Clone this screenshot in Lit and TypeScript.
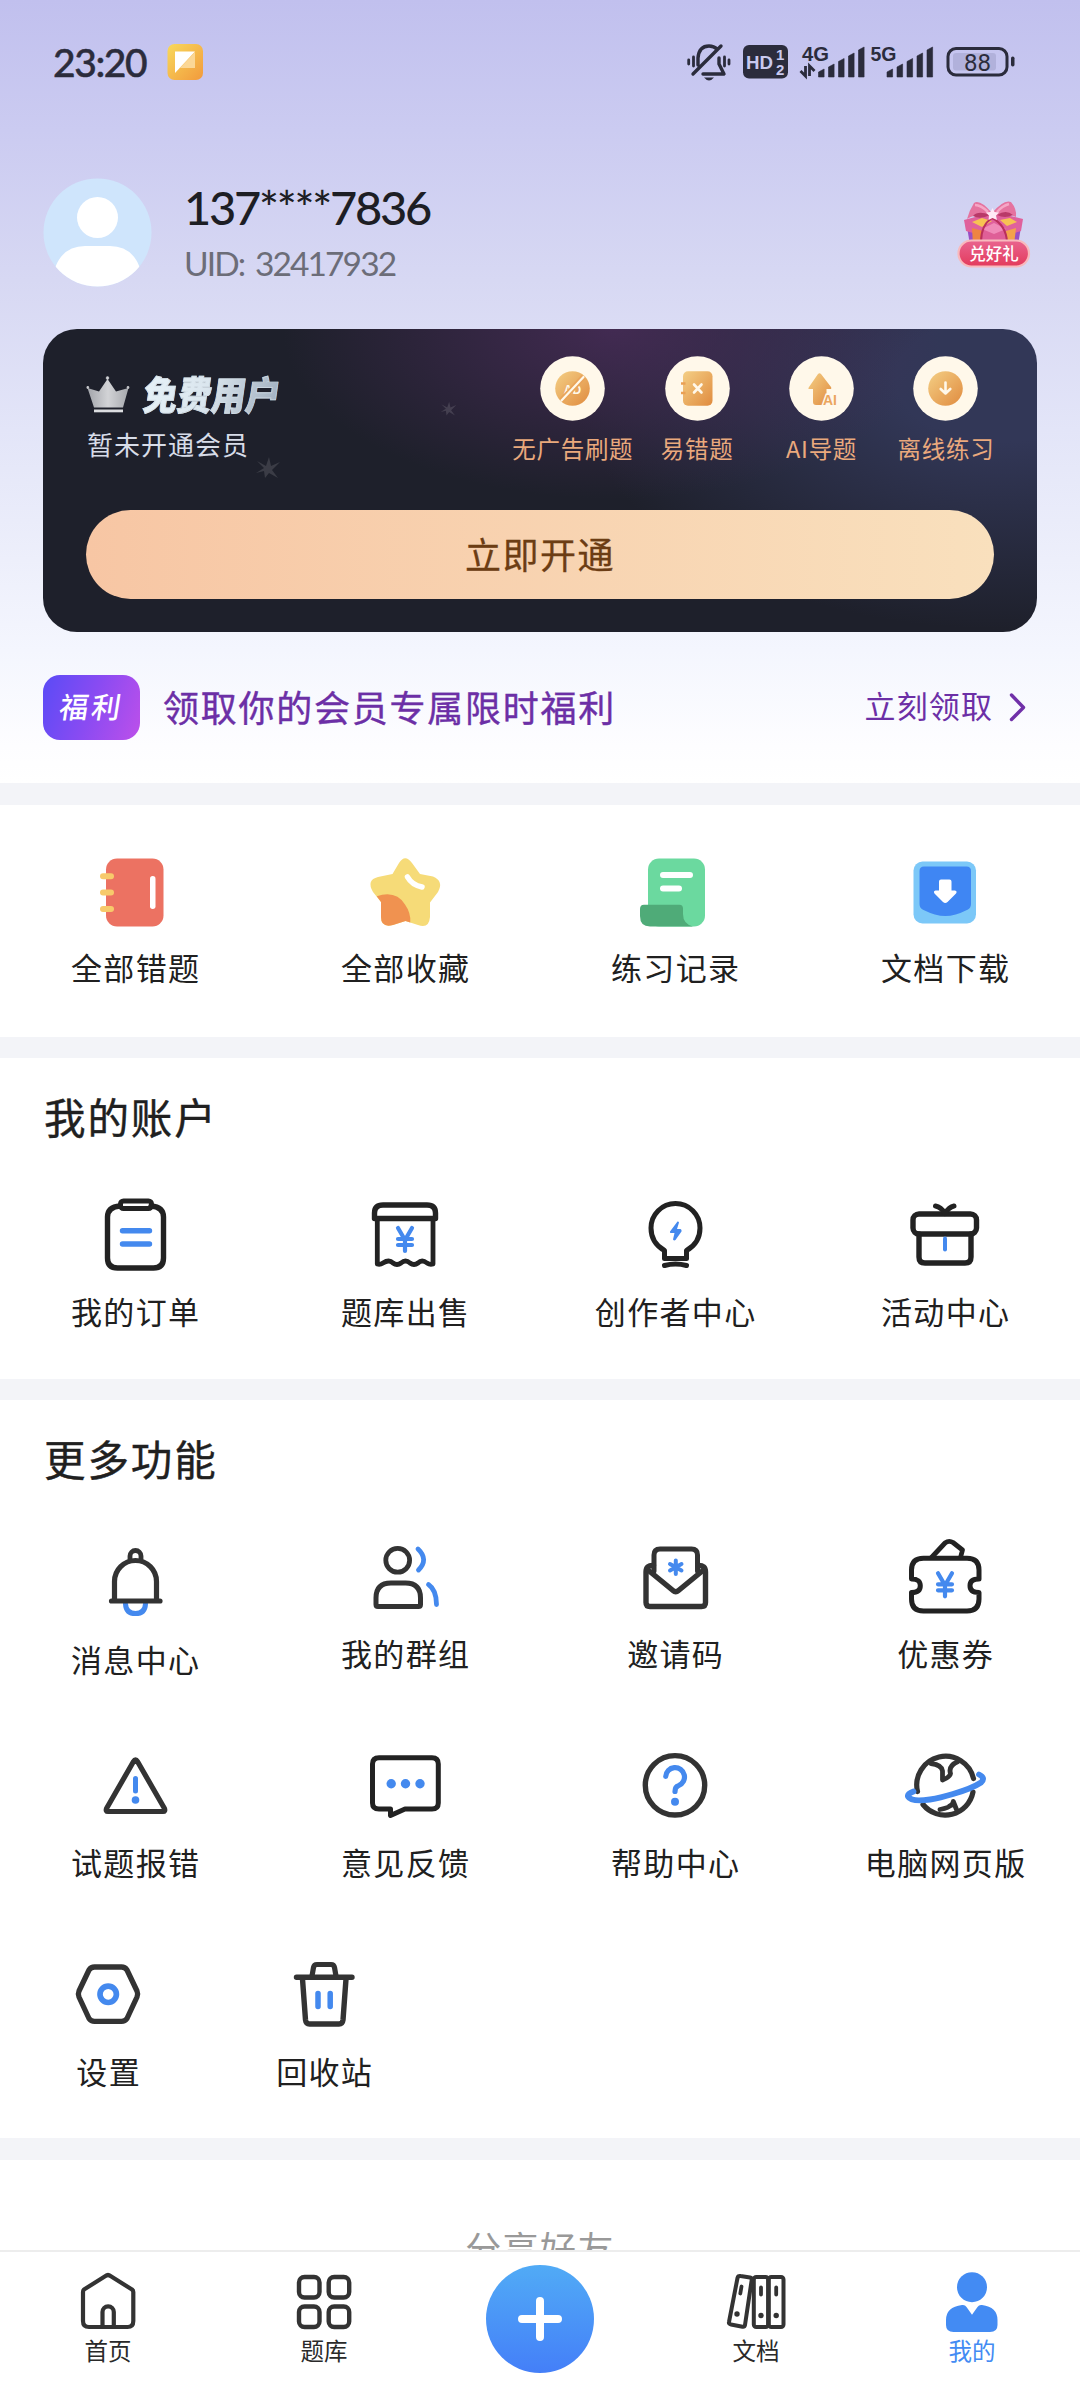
import { LitElement, html, css, svg, type TemplateResult, type SVGTemplateResult } from "lit";
import { customElement, property } from "lit/decorators.js";

type Art = SVGTemplateResult;

interface Entry {
  label: string;
  art: Art;
  low?: boolean;
}

const INK = "#222222";
const SOFT = "#333333";
const BLUE = "#4489ee";

/* Outline helper: rounded stroke without fill. */
const line = (d: string, color = INK, width = 5.4): Art =>
  svg`<path d=${d} fill="none" stroke=${color} stroke-width=${width} stroke-linecap="round" stroke-linejoin="round"></path>`;

const yen = (dy: number): Art =>
  line(`M-7 ${dy - 11}L0 ${dy + 1}L7 ${dy - 11}M0 ${dy + 1}V${dy + 12}M-7 ${dy}H7M-7 ${dy + 6}H7`, BLUE, 4.2);

const art = {
  notebook: svg`
    <rect x="-29" y="-33.5" width="57.5" height="68" rx="11" fill="#ec7262"></rect>
    <rect x="-35" y="-18.7" width="14" height="6" rx="3" fill="#f7ca6b"></rect>
    <rect x="-35" y="-2.5" width="14" height="6" rx="3" fill="#f7ca6b"></rect>
    <rect x="-35" y="14" width="14" height="6" rx="3" fill="#f7ca6b"></rect>
    <rect x="15" y="-16" width="5.5" height="33" rx="2.7" fill="#fff"></rect>`,
  star: svg`
    <path d="M-12.5-18L-6-29Q0-38.500 7-29L15-18L28-15.500Q39-11 33 0L25 10.500V25Q24 37 13 33L.5 29L-12 33Q-24 36-24 25V10L-32 0Q-39-12-27-15Z" fill="#f6db78"></path>
    <path d="M-28.300 4.200Q-9-2 0 12.500Q6 21 5.300 30.500L.5 29L-12 33Q-24 36-24 25V10Z" fill="#f09250"></path>
    ${line("M2.500-15Q7-7 17-5", "#fff", 5.5)}`,
  record: svg`
    <rect x="-27" y="-33.500" width="57" height="68" rx="11" fill="#6bd99f"></rect>
    <path d="M-31 12.700H4.500Q8 12.700 8 16.500V22Q8 32 18 34.500H-25Q-35 34.500-35 24V17Q-35 12.700-31 12.700Z" fill="#4fab78"></path>
    ${line("M-12-17H15M-12-3.500H4", "#fff", 6)}`,
  download: svg`
    <rect x="-31.500" y="-30.500" width="62.500" height="62" rx="9" fill="#7cc8f8"></rect>
    <path d="M-25.500-21Q-25.500-25.500-21-25.500H21.500Q26-25.500 26-21V12Q26 16 22.500 17.700Q10 24 .3 24T-22 17.700Q-25.500 16-25.500 12Z" fill="#3f86f3"></path>
    <path d="M-6-10.500Q-6-12.500-4-12.500H4.500Q6.500-12.500 6.500-10.500V-1.500H10Q12.500-1 11 1.500L2.500 10Q.2 12-2 10L-10.500 1.500Q-12-1-9.500-1.500H-6Z" fill="#fff"></path>`,
  clipboard: svg`
    ${line("M-15-29Q-27.500-28-27.500-18V23Q-27.500 33-17.500 33H18.500Q28.500 33 28.500 23V-18Q28.500-28 16-29")}
    <rect x="-14.500" y="-34" width="31" height="7.500" rx="3" fill="none" stroke=${INK} stroke-width="5"></rect>
    ${line("M-12.500-4.300H14.500M-12.500 9H14.500", BLUE, 5.4)}`,
  bill: svg`
    ${line("M-30.500-16.500V-22Q-30.500-30-22-30H22Q30.500-30 30.500-22V-16.500Z")}
    ${line("M-27.700-16V29Q-25 30-22 28Q-16 24-12 28Q-8 31-4 28Q.5 24 5 28Q9 31 13 28Q17 24 22 28Q25 30 28 29V-16", INK, 4.8)}
    ${yen(4)}`,
  bulb: svg`
    ${line("M-10.500 23.500V15.500Q-24 8-24-7A24.300 24.300 0 0 1 25-7Q25 8 11.500 15.500V23.500Z", INK, 5)}
    ${line("M-10.500 30.500Q.5 27.500 11.500 30.500", INK, 5)}
    <path d="M2.500-13.500L-5-3.500Q-5.500-2 -4-2H-.5L-2 4.500Q-1 6 .5 5L6.500-3.500Q7-5.500 5.500-6H2L4-12.500Q3.500-14 2.500-13.500Z" fill=${BLUE}></path>`,
  gift: svg`
    <rect x="-32" y="-21" width="63.500" height="20" rx="6" fill="none" stroke=${INK} stroke-width="5.400"></rect>
    ${line("M-26-1V22Q-26 28-20 28H20Q26 28 26 22V-1")}
    ${line("M-9.500-29Q-4-28 0-21.500Q4-28 9-29", INK, 5)}
    <rect x="-2" y="1.500" width="4" height="15" rx="2" fill=${BLUE}></rect>`,
  bell: svg`
    ${line("M-9.500 27Q-9 36.500.5 36.500T10.500 27", BLUE, 5)}
    ${line("M-5-17V-21A5.500 5.500 0 0 1 6-21V-17", SOFT, 4.8)}
    ${line("M-20.500 24V4.500A21 21 0 0 1 21.500 4.500V24M-23.500 24H25", SOFT, 5.2)}`,
  group: svg`
    <circle cx="-7.300" cy="-16.700" r="11.900" fill="none" stroke=${SOFT} stroke-width="4.800"></circle>
    ${line("M-29 27.500V21Q-29 6-14 6H.5Q15.500 6 15.500 21V27.500Q15.500 29.500 13.500 29.500H-27Q-29 29.500-29 27.500Z", SOFT, 5)}
    ${line("M13-28Q24-17.500 13.500-7M23.500 7.500Q31.500 13 31.500 27.500", BLUE, 4.8)}`,
  invite: svg`
    ${line("M-21-6V-22Q-21-28-15-28H16.500Q22.500-28 22.500-22V-6", SOFT, 5)}
    ${line("M-21.500-11.500Q-29-12-29-5V25.500Q-29 29.500-25 29.500H26.500Q30.500 29.500 30.500 25.500V-5Q30.500-12 23-11.500", SOFT)}
    ${line("M-27-7L-2 13.500Q.7 16 3.500 13.500L28.500-7", SOFT)}
    ${line("M.8-16.500V-3M-5-13L6.500-6.500M6.500-13L-5-6.500", BLUE, 4)}`,
  coupon: svg`
    ${line("M-33.500 2V-7Q-33.500-18.800-21.500-18.800H22Q34-18.800 34-7V2Q25 2 25 8.700T34 15.500V22Q34 34 22 34H-21.500Q-33.500 34-33.500 22V15.500Q-24.700 15.500-24.700 8.700T-33.500 2Z", INK, 5)}
    ${line("M-13.500-19.500L0-34Q4-37 8-34.500L17.500-27L15.500-19.500", INK, 4.8)}
    ${yen(7.3)}`,
  warning: svg`
    ${line("M-1.500-24.500Q.5-28 2.500-24.500L29.500 22.500Q30.500 25.500 28 25.500H-27Q-29.500 25.500-28.500 22.500Z", SOFT, 5.2)}
    ${line("M.5-7.500V5", BLUE, 5)}
    <circle cx=".5" cy="14" r="3.800" fill=${BLUE}></circle>`,
  chat: svg`
    ${line("M-26-28.300H27Q33.300-28.300 33.300-22V17Q33.300 23 27 23H0L-14.500 29.500V23H-26Q-32.500 23-32.500 17V-22Q-32.500-28.300-26-28.300Z", INK, 5)}
    <circle cx="-13.800" cy="-2.300" r="4.700" fill=${BLUE}></circle>
    <circle cx=".5" cy="-2.300" r="4.700" fill=${BLUE}></circle>
    <circle cx="15" cy="-2.300" r="4.700" fill=${BLUE}></circle>`,
  help: svg`
    <circle cx="0" cy="-.7" r="29.700" fill="none" stroke=${SOFT} stroke-width="5.400"></circle>
    ${line("M-9.300-9.500A9.400 9.400 0 1 1 3.500-.300Q0 .6 0 5.500", BLUE, 5.2)}
    <circle cx="0" cy="15.800" r="4" fill=${BLUE}></circle>`,
  globe: svg`
    ${line("M-27.500 5.500A28.400 28.400 0 1 1 28.500-7.500M-22 18.500A28.400 28.400 0 0 0 28 6", SOFT, 5.2)}
    ${line("M-14-22.500Q-3-21-2.500-15V-6Q5-9 5.500-12.500Q3-20 13-24.500", SOFT, 4.8)}
    ${line("M-5 23.500Q4 22 4.500 20Q8 19 8.300 15.500L11.500 23.500", SOFT, 4.8)}
    ${line("M-31.500 5.500Q-38 8-37 10.500Q-34 16-15 13.500Q-5 12 8 8Q27 2.500 36-3.500Q41-8 34-11.500", BLUE, 5.8)}`,
  settings: svg`
    ${line("M-13.500-27H13.500Q17-27 19-24L29-3Q30.300 0 29 3L19 24.500Q17 27.300 13.500 27.300H-13.500Q-17 27.300-19 24.500L-29 3Q-30.300 0-29-3L-19-24Q-17-27-13.500-27Z", SOFT, 5.3)}
    <circle cx=".2" cy=".3" r="8.200" fill="none" stroke=${BLUE} stroke-width="5.700"></circle>`,
  trash: svg`
    ${line("M-12-18L-10.500-26.500Q-10-29.500-7-29.500H7Q10-29.500 10.500-26.500L12-18", SOFT, 5.2)}
    ${line("M-21.500-15L-18.500 26Q-18 30-14.500 30H15Q18.500 30 19 26L22-15M-27.500-16.700H28", SOFT, 5.4)}
    ${line("M-6-.5V12.500M6.200-.5V12.500", BLUE, 5.5)}`,
  home: svg`
    ${line("M-25-9Q-25-10.500-24-11.500L-2.500-25Q0-27 2.500-25L24-11.500Q25.300-10.500 25.300-9V20Q25.300 26 19.500 26H-19Q-25 26-25 20Z", SOFT, 4.2)}
    ${line("M-5.500 25V11A5.600 5.600 0 0 1 5.800 11V25", SOFT, 4.2)}`,
  grid: svg`
    <g fill="none" stroke=${SOFT} stroke-width="4.400">
      <rect x="-25" y="-24" width="20.500" height="20.500" rx="5.500"></rect>
      <rect x="4.700" y="-24" width="20.500" height="20.500" rx="5.500"></rect>
      <rect x="-25" y="5.500" width="20.500" height="20.500" rx="5.500"></rect>
      <rect x="4.700" y="5.500" width="20.500" height="20.500" rx="5.500"></rect>
    </g>`,
  docs: svg`
    <g fill="none" stroke=${SOFT} stroke-width="4" stroke-linejoin="round">
      <rect x="-2.200" y="-24" width="14.300" height="50" rx="2.500"></rect>
      <rect x="12.800" y="-24" width="14.700" height="50" rx="2.500"></rect>
      <path d="M-15.500-25L-6-23.500Q-4-23-4.300-21L-11 24Q-11.500 26-13.500 25.700L-25 23.500Q-27.500 23-27 21L-18.500-23Q-18-25.500-15.500-25Z"></path>
    </g>
    ${line("M5-13.500V-6.500M20.200-13.500V-6.500M-14.500-14.500L-15.700-7.500", SOFT, 3.8)}
    <circle cx="5" cy="14.500" r="2.700" fill=${SOFT}></circle>
    <circle cx="20.200" cy="14.500" r="2.700" fill=${SOFT}></circle>
    <circle cx="-19" cy="13" r="2.700" fill=${SOFT}></circle>`,
  me: svg`
    <circle cx="0" cy="-13.800" r="15" fill="#438bf3"></circle>
    <path d="M-10 4Q-7 3.500-5.500 6L0 13.800L5.500 6Q7 3.500 10 4Q25.500 6 25.500 19V24Q25.500 31 18 31H-18.500Q-26 31-26 24V19Q-26 6-10 4Z" fill="#438bf3"></path>`,
};

const perks: Entry[] = [
  {
    label: "无广告刷题",
    art: svg`
      <circle r="17.300" fill="url(#gold)"></circle>
      <text x="0" y="5" text-anchor="middle" class="ad">AD</text>
      <path d="M-11 12L11-11.500" stroke="#e9a45a" stroke-width="5.500"></path>
      <path d="M-11 12L11-11.500" stroke="#fff8ea" stroke-width="2.200" stroke-linecap="round"></path>`,
  },
  {
    label: "易错题",
    art: svg`
      <rect x="-14.500" y="-17.300" width="29.500" height="34.500" rx="5" fill="url(#gold)"></rect>
      <path d="M-16.500-5H-12M-16.500 4.500H-12" stroke="#eaa055" stroke-width="2.400"></path>
      <path d="M-3.500-4L4 4M4-4L-3.500 4" stroke="#fff8ea" stroke-width="2.600" stroke-linecap="round"></path>`,
  },
  {
    label: "AI导题",
    art: svg`
      <path d="M-3.500-14.500Q-2-16-.5-14.500L9.500-1.500Q10.500 .5 8.500 .5H5V5L1 16.500H-5.500Q-8.500 16.500-8.500 13.500V.5H-12Q-14 .5-12.500-1.500Z" fill="url(#gold)"></path>
      <text x="1.500" y="16.500" class="ai">AI</text>`,
  },
  {
    label: "离线练习",
    art: svg`
      <circle r="17.300" fill="url(#gold)"></circle>
      <path d="M0-6V4.500M-4.800 .5L0 5L4.800 .5" fill="none" stroke="#fff8ea" stroke-width="2.600" stroke-linecap="round" stroke-linejoin="round"></path>`,
  },
];

const shortcuts: Entry[] = [
  { label: "全部错题", art: art.notebook },
  { label: "全部收藏", art: art.star },
  { label: "练习记录", art: art.record },
  { label: "文档下载", art: art.download },
];

const account: Entry[] = [
  { label: "我的订单", art: art.clipboard },
  { label: "题库出售", art: art.bill },
  { label: "创作者中心", art: art.bulb },
  { label: "活动中心", art: art.gift },
];

const moreRows: Entry[][] = [
  [
    { label: "消息中心", art: art.bell, low: true },
    { label: "我的群组", art: art.group },
    { label: "邀请码", art: art.invite },
    { label: "优惠券", art: art.coupon },
  ],
  [
    { label: "试题报错", art: art.warning },
    { label: "意见反馈", art: art.chat },
    { label: "帮助中心", art: art.help },
    { label: "电脑网页版", art: art.globe },
  ],
];

const tools: Entry[] = [
  { label: "设置", art: art.settings },
  { label: "回收站", art: art.trash },
];

const FONT = css`"Noto Sans CJK SC", "Noto Sans", sans-serif`;

@customElement("icon-tile")
class IconTile extends LitElement {
  @property({ attribute: false }) entry!: Entry;

  static styles = css`
    :host {
      display: flex;
      flex-direction: column;
      align-items: center;
      gap: var(--tile-gap, 16px);
      font-family: ${FONT};
    }
    .icon {
      display: block;
      width: 80px;
      height: 80px;
      overflow: visible;
    }
    .label {
      font-size: 31px;
      line-height: 40px;
      letter-spacing: 1.35px;
      margin-right: -1.35px;
      color: #202020;
      white-space: nowrap;
    }
    .low {
      padding-top: 6px;
    }
  `;

  render() {
    return html`
      <svg class="icon" viewBox="-40 -40 80 80">${this.entry.art}</svg>
      <span class="label ${this.entry.low ? "low" : ""}">${this.entry.label}</span>
    `;
  }
}

@customElement("status-bar")
class StatusBar extends LitElement {
  static styles = css`
    :host {
      display: flex;
      align-items: center;
      height: 44px;
      padding: 40px 60px 0 53px;
    }
    .time {
      font: 500 39px/44px Lato, sans-serif;
      letter-spacing: -1.4px;
      color: #2b2c3c;
      width: 113px;
      -webkit-text-stroke: 0.5px #2b2c3c;
    }
    .app {
      width: 38px;
      height: 38px;
    }
    .right {
      margin-left: auto;
      width: 336px;
      height: 44px;
    }
    .net {
      font: 700 20px "Liberation Sans", sans-serif;
      fill: #2b2c3c;
    }
    .hd {
      font: 700 19px "Liberation Sans", sans-serif;
      fill: #c9c9ee;
    }
    .sub {
      font: 700 15px "Liberation Sans", sans-serif;
      fill: #c9c9ee;
    }
    .pct {
      font: 400 24px Roboto, sans-serif;
      fill: #2b2c3c;
    }
  `;

  private bars(x: number) {
    return [8, 13, 18.5, 24, 30].map(
      (h, i) => svg`<path d=${`M${x + i * 10} 77V${77 - h + 3}L${x + i * 10 + 5.6} ${77 - h}V77Z`} fill="#2b2c3c" stroke="#2b2c3c" stroke-width=".6" stroke-linejoin="round"></path>`,
    );
  }

  render() {
    return html`
      <span class="time">23:20</span>
      <svg class="app" viewBox="0 0 38 38">
        <defs>
          <linearGradient id="app" x1="0" y1="0" x2="1" y2="1">
            <stop offset="0" stop-color="#f8d95c"></stop>
            <stop offset="1" stop-color="#f29a3c"></stop>
          </linearGradient>
        </defs>
        <rect x="1.500" y="1" width="35.500" height="36" rx="7" fill="url(#app)"></rect>
        <path d="M29 9V25H14Z" fill="#fbd796"></path>
        <path d="M9 8.500H29L9 30Z" fill="#fff"></path>
      </svg>
      <svg class="right" viewBox="684 40 336 44">
        <g fill="none" stroke="#2b2c3c" stroke-width="3.400" stroke-linecap="round" stroke-linejoin="round">
          <path d="M698 65V58Q699 46 709 46Q714 46 717 49M719 58V64L724 74H703M693 74L721 46"></path>
          <path d="M693.500 57V66M688.700 60V64M724.500 57V66M729 60V64" stroke-width="2.800"></path>
        </g>
        <path d="M704 77.500H714Q711.500 80.500 709 80.500T704 77.500Z" fill="#2b2c3c"></path>
        <rect x="743" y="45" width="45" height="33.500" rx="6" fill="#2b2c3c"></rect>
        <text x="746" y="68.500" class="hd" textLength="27" lengthAdjust="spacingAndGlyphs">HD</text>
        <text x="776" y="59.500" class="sub">1</text>
        <text x="776" y="75" class="sub">2</text>
        <text x="802" y="60.500" class="net" textLength="27" lengthAdjust="spacingAndGlyphs">4G</text>
        <path d="M805.500 66V76L800.500 71M809.500 76V66L814.500 71" fill="none" stroke="#2b2c3c" stroke-width="2.800"></path>
        ${this.bars(818.5)}
        <text x="870.500" y="60.500" class="net" textLength="26" lengthAdjust="spacingAndGlyphs">5G</text>
        ${this.bars(887)}
        <rect x="948" y="48.500" width="59" height="26.500" rx="8" fill="none" stroke="#2b2c3c" stroke-width="3"></rect>
        <rect x="953" y="53" width="43" height="17.500" rx="3" fill="#b1b1db"></rect>
        <rect x="1011" y="56.500" width="3.500" height="10" rx="1.700" fill="#2b2c3c"></rect>
        <text x="977.500" y="70.500" class="pct" text-anchor="middle">88</text>
      </svg>
    `;
  }
}

@customElement("vip-card")
class VipCard extends LitElement {
  static styles = css`
    :host {
      display: flex;
      flex-direction: column;
      box-sizing: border-box;
      height: 303px;
      padding: 27px 43px 0;
      border-radius: 34px;
      font-family: ${FONT};
      background:
        radial-gradient(ellipse 330px 170px at 570px 0, rgba(72, 44, 88, 0.85), rgba(72, 44, 88, 0) 100%),
        radial-gradient(ellipse 430px 250px at 960px 50px, #323757 25%, rgba(50, 55, 87, 0) 100%),
        #1e202b;
      position: relative;
    }
    .spark {
      position: absolute;
      width: 26px;
      height: 26px;
      left: 212px;
      top: 127px;
    }
    .dim {
      left: 397px;
      top: 72px;
      width: 17px;
      height: 17px;
    }
    .top {
      display: flex;
      justify-content: space-between;
      height: 154px;
      margin-right: -14px;
    }
    .level {
      display: flex;
      align-items: center;
      height: 44px;
      margin-top: 16px;
      gap: 14px;
    }
    .crown {
      width: 44px;
      height: 38px;
    }
    .name {
      font-size: 34px;
      line-height: 44px;
      font-weight: 900;
      transform: skewX(-8deg) scaleY(1.16);
      background: linear-gradient(100deg, #e6f1f8, #dbe6ee 45%, #9fadbd);
      -webkit-background-clip: text;
      background-clip: text;
      color: transparent;
      -webkit-text-stroke: 0.8px rgba(214, 225, 234, 0.7);
      letter-spacing: 0.2px;
    }
    .state {
      margin-top: 13px;
      font-size: 26px;
      line-height: 30px;
      letter-spacing: 1px;
      padding-left: 1px;
      color: #d7dce8;
    }
    .perks {
      display: grid;
      grid-template-columns: repeat(4, 124.4px);
    }
    .perk {
      display: flex;
      flex-direction: column;
      align-items: center;
      gap: 12px;
    }
    .disc {
      width: 65px;
      height: 65px;
    }
    .perk-label {
      font-size: 23.500px;
      line-height: 30px;
      letter-spacing: 0.7px;
      margin-right: -0.3px;
      white-space: nowrap;
      color: #eaa97d;
    }
    .ad {
      font: 700 12px "Liberation Sans", sans-serif;
      fill: #fff8ea;
    }
    .ai {
      font: 700 14px "Liberation Sans", sans-serif;
      fill: #eba55e;
      stroke: #fff8ea;
      stroke-width: 3px;
      paint-order: stroke;
    }
    .open {
      height: 89px;
      border: 0;
      border-radius: 45px;
      background: linear-gradient(90deg, #f7c6a4, #f9e0bd);
      color: #6c3d14;
      font: 400 36px/82px ${FONT};
      letter-spacing: 1.5px;
      padding: 0 0 4px;
      -webkit-text-stroke: 0.3px #6c3d14;
    }
  `;

  private perk(p: Entry): TemplateResult {
    return html`
      <div class="perk">
        <svg class="disc" viewBox="-32.5 -32.5 65 65">
          <defs>
            <linearGradient id="gold" x1="0" y1="0" x2="1" y2="1">
              <stop offset="0" stop-color="#f4cf85"></stop>
              <stop offset="1" stop-color="#e08b3f"></stop>
            </linearGradient>
          </defs>
          <circle r="32.300" fill="#fff8ea"></circle>
          ${p.art}
        </svg>
        <span class="perk-label">${p.label}</span>
      </div>
    `;
  }

  private spark(kind = "") {
    return html`<svg class="spark ${kind}" viewBox="-13 -13 26 26">
      <path d="M-11-8L-2-3L1-12L3-3L12-7L4 1L10 9L1 4L-3 9L-4 2L-12 4L-4-1Z" fill="#fff" opacity=".13"></path>
    </svg>`;
  }

  render() {
    return html`
      ${this.spark()} ${this.spark("dim")}
      <div class="top">
        <div>
          <div class="level">
            <svg class="crown" viewBox="0 0 44 38">
              <defs>
                <linearGradient id="silver" x1="0" y1="0" x2="1" y2="0">
                  <stop offset="0" stop-color="#a2a4aa"></stop>
                  <stop offset=".5" stop-color="#d2d3d6"></stop>
                  <stop offset="1" stop-color="#a6a8ad"></stop>
                </linearGradient>
              </defs>
              <g fill="url(#silver)">
                <path d="M1.500 13L13 16.500L21.500 4L30 16.500L42.500 13L37 32.500H8Z"></path>
                <circle cx="21.500" cy="3" r="1.800"></circle>
                <circle cx="1.800" cy="12.500" r="1.400"></circle>
                <circle cx="42" cy="12.500" r="1.400"></circle>
              </g>
              <rect x="8" y="34.500" width="29" height="2.800" fill="#dcdde0"></rect>
            </svg>
            <span class="name">免费用户</span>
          </div>
          <div class="state">暂未开通会员</div>
        </div>
        <div class="perks">${perks.map((p) => this.perk(p))}</div>
      </div>
      <button class="open">立即开通</button>
    `;
  }
}

@customElement("tab-bar")
class TabBar extends LitElement {
  static styles = css`
    :host {
      display: grid;
      grid-template-columns: repeat(5, 1fr);
      box-sizing: border-box;
      height: 153px;
      border-top: 2px solid #ededed;
      background: #fff;
      font-family: ${FONT};
    }
    .tab {
      display: flex;
      flex-direction: column;
      align-items: center;
      padding-top: 17px;
      color: #2a2a2a;
    }
    .on {
      color: #438bf3;
    }
    .icon {
      width: 64px;
      height: 64px;
    }
    .label {
      margin-top: 2px;
      font-size: 23.500px;
      line-height: 30px;
    }
    .add {
      width: 108px;
      height: 108px;
      margin: 13px auto 0;
      border-radius: 50%;
      background: linear-gradient(180deg, #51abf6, #447ff8);
      display: flex;
    }
    .plus {
      width: 46px;
      height: 46px;
      margin: auto;
    }
  `;

  private tab(label: string, icon: Art, on = false) {
    return html`<div class="tab ${on ? "on" : ""}">
      <svg class="icon" viewBox="-32 -32 64 64">${icon}</svg>
      <span class="label">${label}</span>
    </div>`;
  }

  render() {
    return html`
      ${this.tab("首页", art.home)} ${this.tab("题库", art.grid)}
      <div class="add">
        <svg class="plus" viewBox="-23 -23 46 46">${line("M-18 0H18M0-18V18", "#fff", 8)}</svg>
      </div>
      ${this.tab("文档", art.docs)} ${this.tab("我的", art.me, true)}
    `;
  }
}

@customElement("app-root")
class AppRoot extends LitElement {
  static styles = css`
    :host {
      display: flex;
      flex-direction: column;
      width: 1080px;
      height: 2403px;
      overflow: hidden;
      background: #f3f4f8;
      font-family: ${FONT};
      color: #202020;
    }
    .page {
      flex: 1;
      min-height: 0;
      overflow: hidden;
      display: flex;
      flex-direction: column;
    }
    .hero {
      flex: none;
      box-sizing: border-box;
      height: 783px;
      background: linear-gradient(180deg, #c1c0ee 0, #cbcbf1 130px, #d7d8f3 280px, #e3e5f8 430px, #edeffb 560px, #f4f6fe 650px, #fdfdff 745px, #fff 783px);
    }
    .profile {
      display: flex;
      height: 109px;
      padding: 94px 46px 0 43px;
    }
    .avatar {
      width: 109px;
      height: 109px;
    }
    .who {
      margin-left: 32px;
    }
    .phone {
      font: 500 47px/56px Lato, sans-serif;
      letter-spacing: -2.25px;
      margin-top: 1px;
      color: #1d1e24;
    }
    .uid {
      font: 400 33.500px/40px Lato, sans-serif;
      letter-spacing: -1.900px;
      word-spacing: 4px;
      margin-top: 8px;
      color: #6c6d78;
    }
    .reward {
      width: 80px;
      height: 72px;
      margin: 19px 0 0 auto;
    }
    .reward-text {
      font: 500 16.500px ${FONT};
      fill: #fff;
    }
    .vip {
      margin: 42px 43px 0;
    }
    .benefit {
      display: flex;
      align-items: center;
      height: 65px;
      margin: 43px 53px 0 43px;
      color: #6c2fa6;
    }
    .badge {
      width: 97px;
      height: 65px;
      border-radius: 17px;
      background: linear-gradient(110deg, #5a4bf6, #8a4bf2 50%, #bd50ea);
      color: #fff;
      font-size: 29px;
      font-weight: 500;
      line-height: 60px;
      text-align: center;
    }
    .slant {
      display: inline-block;
      transform: skewX(-9deg);
      letter-spacing: 3px;
      margin-right: -2px;
    }
    .benefit-text {
      margin-left: 23px;
      font-size: 36px;
      line-height: 60px;
      letter-spacing: 1.75px;
      padding-bottom: 4px;
      -webkit-text-stroke: 0.4px #6c2fa6;
    }
    .claim {
      margin-left: auto;
      font-size: 31px;
      line-height: 60px;
      letter-spacing: 1.100px;
      padding-bottom: 5px;
    }
    .chevron {
      width: 20px;
      height: 32px;
      margin-left: 14px;
    }
    .block {
      flex: none;
      box-sizing: border-box;
      background: #fff;
    }
    .quick {
      height: 232px;
      margin-top: 22px;
      padding-top: 47px;
      --tile-gap: 15px;
    }
    .mine {
      height: 321px;
      margin-top: 21px;
      padding-top: 33px;
    }
    .more {
      height: 738px;
      margin-top: 21px;
      padding-top: 33px;
    }
    .title {
      margin: 0 0 54px 44px;
      font-size: 41.500px;
      line-height: 50px;
      font-weight: 400;
      letter-spacing: 1.900px;
      -webkit-text-stroke: 0.4px #202020;
    }
    .row {
      display: grid;
      grid-template-columns: repeat(4, 1fr);
      align-items: start;
      height: 136px;
    }
    .row + .row {
      margin-top: 73px;
    }
    .five {
      grid-template-columns: repeat(5, 1fr);
      --tile-gap: 17px;
    }
    .row + .five {
      margin-top: 72px;
    }
    .share {
      flex: none;
      height: 240px;
      margin-top: 22px;
      padding-top: 62px;
      background: #fff;
      text-align: center;
      font-size: 36px;
      line-height: 50px;
      letter-spacing: 1.400px;
      color: #999;
    }
  `;

  private row(entries: Entry[], kind = "") {
    return html`<div class="row ${kind}">
      ${entries.map((e) => html`<icon-tile .entry=${e}></icon-tile>`)}
    </div>`;
  }

  render() {
    return html`
      <div class="page">
        <header class="hero">
          <status-bar></status-bar>
          <div class="profile">
            <svg class="avatar" viewBox="0 0 109 109">
              <defs><clipPath id="round"><circle cx="54.500" cy="54.500" r="54"></circle></clipPath></defs>
              <g clip-path="url(#round)">
                <rect width="109" height="109" fill="#cfe5fc"></rect>
                <circle cx="54.500" cy="39.500" r="20.500" fill="#fff"></circle>
                <path d="M8 109Q12 68 42 68H67Q97 68 101 109Z" fill="#fff"></path>
              </g>
            </svg>
            <div class="who">
              <div class="phone">137****7836</div>
              <div class="uid">UID: 32417932</div>
            </div>
            <svg class="reward" viewBox="0 0 80 72">
              <defs>
                <linearGradient id="pill" x1="0" y1="0" x2="0" y2="1">
                  <stop offset="0" stop-color="#e9648f"></stop>
                  <stop offset="1" stop-color="#e33a5c"></stop>
                </linearGradient>
              </defs>
              <path d="M13 30L67 30L64 48H16Z" fill="#9a4fc4"></path>
              <path d="M10 23L40 15L69 22L67 34L40 42L12 34Z" fill="#e0619c"></path>
              <path d="M18 31L29 34V48H19Z" fill="#ee8443"></path>
              <path d="M52 34L62 31L60 48H52Z" fill="#f3a24c"></path>
              <path d="M18 25L28 21L38 24L28 30Z" fill="#f7c253"></path>
              <path d="M46 23L56 21L63 25L53 29Z" fill="#f7c253"></path>
              <path d="M28 32L40 26L52 32V42L40 46L28 42Z" fill="#f08bb9"></path>
              <path d="M28 32L40 37L52 32V44H28Z" fill="#df5f97"></path>
              <path d="M27 45Q27 28 38 21Q52 28 53 45" fill="none" stroke="#b92f5c" stroke-width="2"></path>
              <path d="M38 16Q26 2 20 6Q15 14 13 22Q26 14 38 20Z" fill="#e5739f"></path>
              <path d="M38 16Q50 2 57 5Q63 12 62 20Q50 14 38 20Z" fill="#e5739f"></path>
              <path d="M19 19Q24 13 36 18Q26 23 19 19ZM43 18Q52 12 59 18Q51 22 43 18Z" fill="#b93a68"></path>
              <path d="M21 8Q27 8 34 15M55 7Q48 9 43 15" fill="none" stroke="#f5a7c6" stroke-width="2.500"></path>
              <path d="M38.500 11L40.500 15L45 15.500L42 18.500L43 23L38.500 21L34.500 23L35 18.500L32 15.500L36.500 15Z" fill="#ffe9f6"></path>
              <rect x="4.500" y="43.500" width="70.500" height="26" rx="13" fill="url(#pill)" stroke="#f8b9bd" stroke-width="2.200"></rect>
              <text x="40" y="62.500" text-anchor="middle" class="reward-text">兑好礼</text>
            </svg>
          </div>
          <vip-card class="vip"></vip-card>
          <div class="benefit">
            <div class="badge"><span class="slant">福利</span></div>
            <span class="benefit-text">领取你的会员专属限时福利</span>
            <span class="claim">立刻领取</span>
            <svg class="chevron" viewBox="0 0 20 32">
              <path d="M4.500 3L16.500 15.500L4.500 27.500" fill="none" stroke="#7030a8" stroke-width="3.400" stroke-linecap="round" stroke-linejoin="round"></path>
            </svg>
          </div>
        </header>
        <section class="block quick">${this.row(shortcuts)}</section>
        <section class="block mine">
          <h2 class="title">我的账户</h2>
          ${this.row(account)}
        </section>
        <section class="block more">
          <h2 class="title">更多功能</h2>
          ${moreRows.map((r) => this.row(r))} ${this.row(tools, "five")}
        </section>
        <div class="share">分享好友</div>
      </div>
      <tab-bar></tab-bar>
    `;
  }
}
